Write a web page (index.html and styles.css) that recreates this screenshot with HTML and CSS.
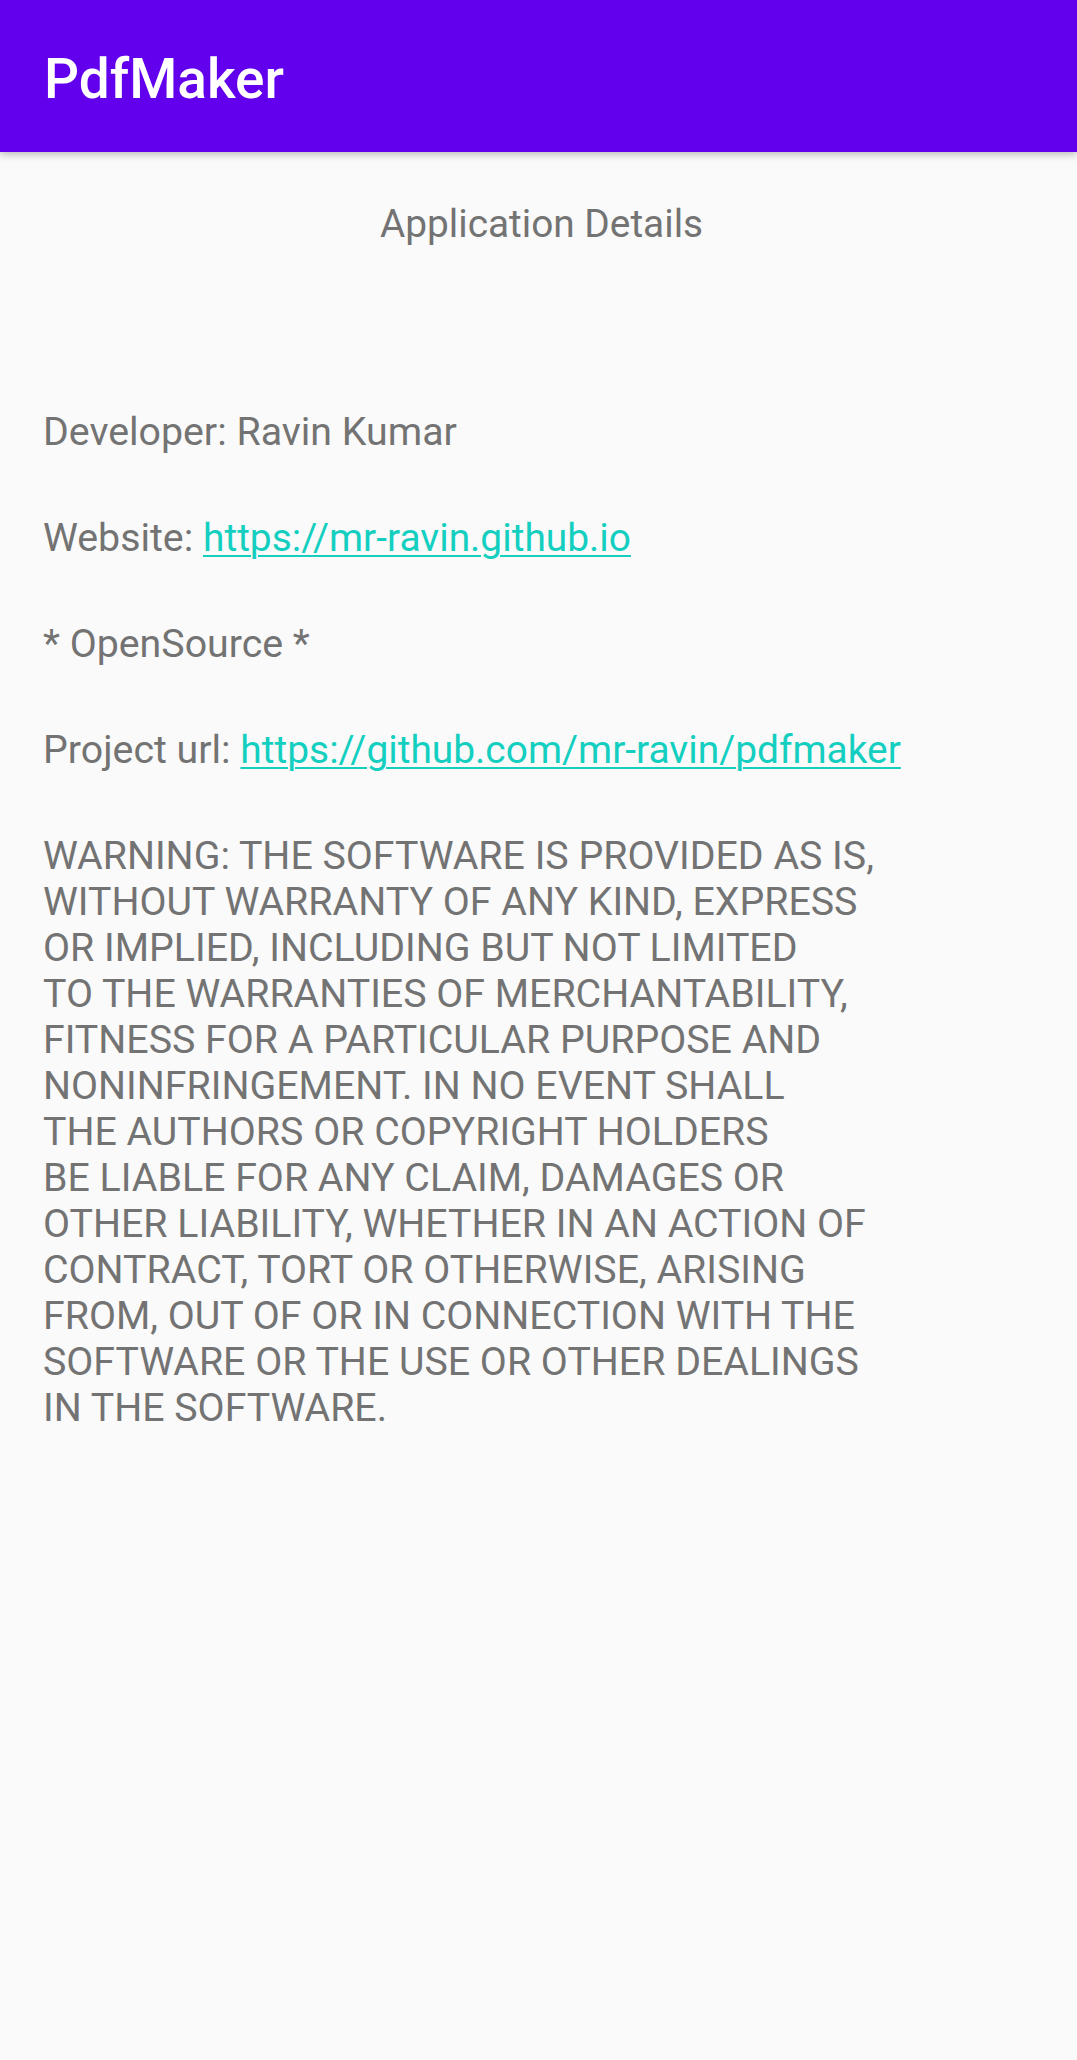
FILE: index.html
```html
<!DOCTYPE html>
<html lang="en">
<head>
<meta charset="utf-8">
<title>PdfMaker</title>
<link rel="stylesheet" href="styles.css">
</head>
<body>
<header class="appbar">
  <h1 class="appbar-title">PdfMaker</h1>
</header>
<main class="content">
  <p class="heading">Application Details</p>
  <div class="details">
    <p class="line">Developer: Ravin Kumar</p>
    <p class="line">Website: <a class="link" href="#">https://mr-ravin.github.io</a></p>
    <p class="line">* OpenSource *</p>
    <p class="line">Project url: <a class="link" href="#">https://github.com/mr-ravin/pdfmaker</a></p>
    <p class="line warning">WARNING: THE SOFTWARE IS PROVIDED AS IS,<br>WITHOUT WARRANTY OF ANY KIND, EXPRESS<br>OR IMPLIED, INCLUDING BUT NOT LIMITED<br>TO THE WARRANTIES OF MERCHANTABILITY,<br>FITNESS FOR A PARTICULAR PURPOSE AND<br>NONINFRINGEMENT. IN NO EVENT SHALL<br>THE AUTHORS OR COPYRIGHT HOLDERS<br>BE LIABLE FOR ANY CLAIM, DAMAGES OR<br>OTHER LIABILITY, WHETHER IN AN ACTION OF<br>CONTRACT, TORT OR OTHERWISE, ARISING<br>FROM, OUT OF OR IN CONNECTION WITH THE<br>SOFTWARE OR THE USE OR OTHER DEALINGS<br>IN THE SOFTWARE.</p>
  </div>
</main>
</body>
</html>
```
FILE: styles.css
```css
html, body {
  margin: 0;
  padding: 0;
}
body {
  background: #fafafa;
  font-family: Roboto, "Liberation Sans", sans-serif;
  min-height: 2060px;
}
.appbar {
  box-sizing: border-box;
  height: 152px;
  background: #6200ee;
  display: flex;
  align-items: center;
  padding: 6px 0 0 44px;
  box-shadow: 0 2px 8px rgba(0, 0, 0, 0.28);
  position: relative;
}
.appbar-title {
  margin: 0;
  color: #ffffff;
  font-size: 55px;
  font-weight: 500;
  line-height: normal;
}
.content {
  padding: 49px 0 0 43px;
  color: #737373;
  font-size: 39.3px;
  line-height: 46px;
}
.heading {
  margin: 0 37px 0 0;
  text-align: center;
  font-size: 38.8px;
}
.details {
  margin-top: 162px;
  display: flex;
  flex-direction: column;
  gap: 60px;
}
.line {
  margin: 0;
}
.link {
  color: #14cfc0;
  font-size: 38.9px;
  text-decoration: underline;
  text-decoration-thickness: 2px;
  text-underline-offset: 4px;
}
```
